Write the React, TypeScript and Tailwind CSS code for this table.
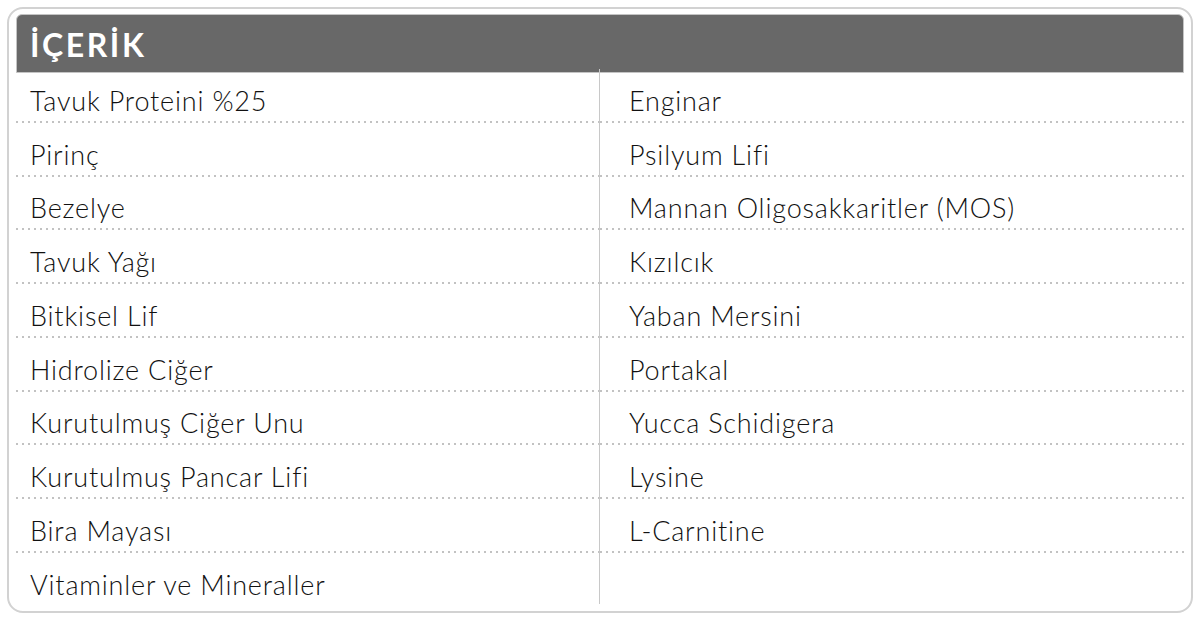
const left = [
  'Tavuk Proteini %25',
  'Pirinç',
  'Bezelye',
  'Tavuk Yağı',
  'Bitkisel Lif',
  'Hidrolize Ciğer',
  'Kurutulmuş Ciğer Unu',
  'Kurutulmuş Pancar Lifi',
  'Bira Mayası',
  'Vitaminler ve Mineraller',
];

const right = [
  'Enginar',
  'Psilyum Lifi',
  'Mannan Oligosakkaritler (MOS)',
  'Kızılcık',
  'Yaban Mersini',
  'Portakal',
  'Yucca Schidigera',
  'Lysine',
  'L-Carnitine',
];

function Row({ text, last, side }: { text: string; last?: boolean; side: 'l' | 'r' }) {
  return (
    <div className="h-[53.75px] flex flex-col justify-end">
      <div
        className={`pb-[4px] text-[27px] font-light tracking-[0.03em] leading-none text-[#111] [font-variant-ligatures:none] ${side === 'l' ? 'pl-[14px]' : 'pl-[29px]'}`}
      >
        {text}
      </div>
      <div
        className={`h-[2px] mt-[3px] bg-[linear-gradient(to_right,#c2c2c2_2px,transparent_2px)] bg-[length:6px_2px] bg-repeat-x ${last ? 'opacity-0' : ''}`}
      />
    </div>
  );
}

export default function App() {
  return (
    <div className="w-[1200px] h-[620px] bg-white p-[7px] font-['Lato','Liberation_Sans',sans-serif]">
      <div className="h-[606px] border-2 border-[#d2d2d2] rounded-[16px] px-[7px] pt-[5px]">
        {/* Header */}
        <div className="h-[59px] bg-[#686868] rounded-t-[6px] border border-[#c4c4c4] flex items-center pl-[13px]">
          <h2 className="text-[32px] font-bold text-white tracking-[0.08em] leading-none pt-[2px]">İÇERİK</h2>
        </div>

        {/* Columns */}
        <div className="relative -mt-[4px] grid grid-cols-[583px_1fr]">
          <div>
            {left.map((t, i) => (
              <Row key={t} text={t} side="l" last={i === left.length - 1} />
            ))}
          </div>
          <div className="border-l border-[#c8c8c8] h-[535px]">
            {right.map((t) => (
              <Row key={t} text={t} side="r" />
            ))}
          </div>
        </div>
      </div>
    </div>
  );
}
